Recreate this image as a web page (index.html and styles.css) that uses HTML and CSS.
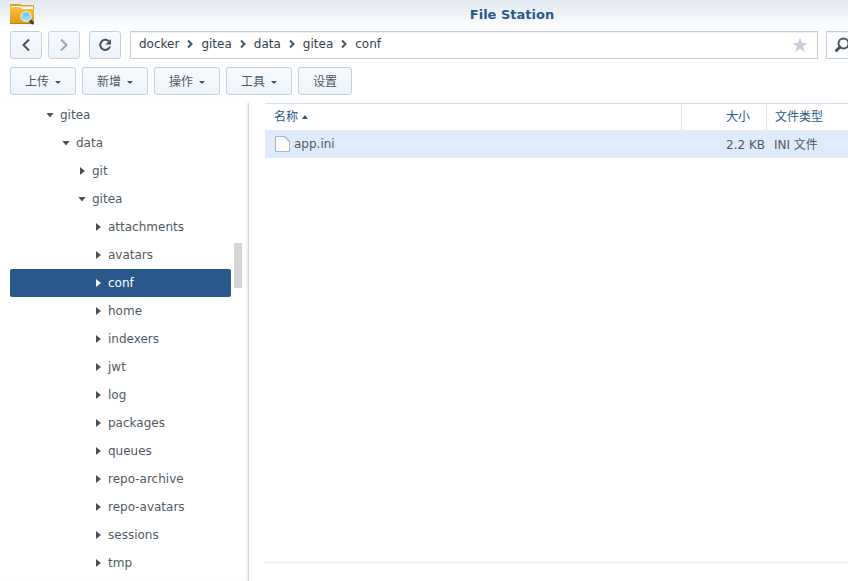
FILE: index.html
```html
<!DOCTYPE html>
<html lang="zh-CN">
<head>
<meta charset="utf-8">
<title>File Station</title>
<link rel="stylesheet" href="styles.css">
</head>
<body>
<div class="window">
  <header class="titlebar">
    <svg class="app-icon" width="26" height="22" viewBox="0 0 26 22" aria-hidden="true">
      <defs>
        <linearGradient id="folder" x1="0" y1="0" x2="0" y2="1"><stop offset="0" stop-color="#fcc03c"/><stop offset="1" stop-color="#dc9a18"/></linearGradient>
        <linearGradient id="lens" x1="0" y1="0" x2="0" y2="1"><stop offset="0" stop-color="#62c3f6"/><stop offset="1" stop-color="#a4e6fd"/></linearGradient>
      </defs>
      <path d="M0 1Q0 0 1 0H10L12 1H22Q24 1 24 2V10H0Z" fill="#e0a01f"/>
      <path d="M1 2H10L11 2.500H23V7H1Z" fill="#fffdf5"/>
      <path d="M0 3H10L12 5H24V19Q24 20 23 20H1Q0 20 0 19Z" fill="url(#folder)"/>
      <path d="M0 19.500H24" stroke="#c17d0c"/>
      <path d="M19.500 16L22.500 19" stroke="#32475b" stroke-width="3" stroke-linecap="round"/>
      <circle cx="16" cy="12.500" r="5" fill="url(#lens)" stroke="#e9dfc0" stroke-width="1.500"/>
    </svg>
    <h1 class="title">File Station</h1>
  </header>

  <div class="navbar">
    <button class="btn nav" aria-label="后退"><svg width="10" height="14" viewBox="0 0 10 14"><path d="M8 1.500L2.500 7L8 12.500" fill="none" stroke="#465360" stroke-width="2"/></svg></button>
    <button class="btn nav forward" aria-label="前进"><svg width="10" height="14" viewBox="0 0 10 14"><path d="M2 1.500L7.500 7L2 12.500" fill="none" stroke="#9ba5b0" stroke-width="2"/></svg></button>
    <button class="btn nav reload" aria-label="刷新"><svg width="14" height="14" viewBox="0 0 14 14"><path d="M10.800 3.300A5 5 0 1 0 12 8.500" fill="none" stroke="#465360" stroke-width="2"/><path d="M13 1V6.500H7.500Z" fill="#465360"/></svg></button>
    <nav class="path" aria-label="路径">
      <a href="#">docker</a><svg class="sep" width="6" height="8" viewBox="0 0 6 8"><path d="M1 .5L4.500 4L1 7.500" /></svg>
      <a href="#">gitea</a><svg class="sep" width="6" height="8" viewBox="0 0 6 8"><path d="M1 .5L4.500 4L1 7.500" /></svg>
      <a href="#">data</a><svg class="sep" width="6" height="8" viewBox="0 0 6 8"><path d="M1 .5L4.500 4L1 7.500" /></svg>
      <a href="#">gitea</a><svg class="sep" width="6" height="8" viewBox="0 0 6 8"><path d="M1 .5L4.500 4L1 7.500" /></svg>
      <a href="#">conf</a>
      <button class="star" aria-label="收藏"><svg width="16" height="16" viewBox="0 0 16 16"><path d="M8 .5L10 6H15.500L11.200 9.400L12.800 15L8 11.700L3.200 15L4.800 9.400L.5 6H6Z" fill="#c5d1de"/></svg></button>
    </nav>
    <label class="search">
      <svg width="17" height="17" viewBox="0 0 17 17" aria-hidden="true"><circle cx="9.500" cy="6.500" r="5" fill="none" stroke="#465360" stroke-width="2"/><path d="M6 10L2.500 13.500" stroke="#465360" stroke-width="3" stroke-linecap="round"/></svg>
      <input type="search" aria-label="搜索">
    </label>
  </div>

  <div class="toolbar">
    <button class="btn">上传<i class="caret"></i></button>
    <button class="btn">新增<i class="caret"></i></button>
    <button class="btn">操作<i class="caret"></i></button>
    <button class="btn">工具<i class="caret"></i></button>
    <button class="btn">设置</button>
  </div>

  <div class="content">
    <aside class="sidebar">
      <ul class="tree">
        <li class="node level1 open"><a href="#">gitea</a></li>
        <li class="node level2 open"><a href="#">data</a></li>
        <li class="node level3"><a href="#">git</a></li>
        <li class="node level3 open"><a href="#">gitea</a></li>
        <li class="node level4"><a href="#">attachments</a></li>
        <li class="node level4"><a href="#">avatars</a></li>
        <li class="node level4 selected"><a href="#">conf</a></li>
        <li class="node level4"><a href="#">home</a></li>
        <li class="node level4"><a href="#">indexers</a></li>
        <li class="node level4"><a href="#">jwt</a></li>
        <li class="node level4"><a href="#">log</a></li>
        <li class="node level4"><a href="#">packages</a></li>
        <li class="node level4"><a href="#">queues</a></li>
        <li class="node level4"><a href="#">repo-archive</a></li>
        <li class="node level4"><a href="#">repo-avatars</a></li>
        <li class="node level4"><a href="#">sessions</a></li>
        <li class="node level4"><a href="#">tmp</a></li>
      </ul>
      <div class="thumb"></div>
    </aside>
    <main class="files">
      <table class="grid">
        <thead>
          <tr><th class="name">名称<i class="sort"></i></th><th class="size">大小</th><th class="type">文件类型</th></tr>
        </thead>
        <tbody>
          <tr>
            <td class="name"><span class="file"><svg width="16" height="17" viewBox="0 0 16 17" aria-hidden="true"><path d="M1.500 .5H10.500L15.500 5.500V15.500H1.500Z" fill="#fff" stroke="#a9b8c0"/><path d="M10 .5H11L15.500 5V6Z" fill="#a9b8c0" stroke="#a9b8c0"/></svg>app.ini</span></td>
            <td class="size">2.2 KB</td>
            <td class="type">INI 文件</td>
          </tr>
        </tbody>
      </table>
      <footer class="status"></footer>
    </main>
  </div>
</div>
</body>
</html>
```
FILE: styles.css
```css
* { box-sizing: border-box; }

body {
  margin: 0;
  overflow: hidden;
  background: #fff;
  color: #505a64;
  font: 12px/18px "DejaVu Sans", "Noto Sans CJK SC", sans-serif;
}

a { color: inherit; text-decoration: none; }
button, input { font: inherit; color: inherit; }

.window {
  display: flex;
  flex-direction: column;
  min-width: 1024px;
  height: 100vh;
  background: linear-gradient(#e1e8f1, #fff 30px);
}

.titlebar {
  display: grid;
  grid-template-columns: 1fr auto 1fr;
  align-items: center;
  height: 31px;
  padding: 0 10px;
}
.app-icon { display: block; margin-top: -2px; }
.title {
  margin: 0 0 2px;
  color: #2a588c;
  font-size: 13px;
  font-weight: bold;
}

.navbar, .toolbar {
  display: flex;
  height: 28px;
  margin: 0 10px 8px;
}
.toolbar { gap: 6px; }

.btn {
  display: flex;
  align-items: center;
  justify-content: center;
  gap: 6px;
  padding: 2px 14px 0;
  border: 1px solid #c3d0de;
  border-radius: 3px;
  background: linear-gradient(#f7fbff, #edf3f8);
}
.nav { width: 32px; padding: 0; margin-right: 6px; }
.forward { border-color: #c9d4e0; margin-right: 9px; }
.reload { margin-right: 9px; }

.caret {
  margin-top: 1px;
  border: 3px solid transparent;
  border-top-color: #465360;
  border-bottom: 0;
}

.path {
  display: flex;
  flex: 1;
  align-items: center;
  padding: 0 8px 2px;
  border: 1px solid #c0cddb;
  background: #fff;
  box-shadow: inset 0 1px #f1f1f1;
  color: #35404b;
}
.sep { margin: 0 8px; fill: none; stroke: #465360; stroke-width: 2; }
.star {
  display: flex;
  margin: 2px 1px 0 auto;
  padding: 0;
  border: 0;
  background: none;
}

.search {
  display: flex;
  align-items: center;
  width: 188px;
  margin-left: 8px;
  padding: 0 7px;
  border: 1px solid #c0cddb;
  background: #fff;
  box-shadow: inset 0 1px #f1f1f1;
}
.search input { flex: 1; min-width: 0; border: 0; outline: 0; background: none; }

.content { display: flex; flex: 1; min-height: 0; }

.sidebar {
  position: relative;
  width: 249px;
  padding: 0 17px 0 10px;
  overflow: hidden;
  border-right: 1px solid #d5d7d9;
  box-shadow: inset -3px 0 3px -2px #e4e4e4;
}
.tree { margin: -2px 0 0; padding: 0; list-style: none; }
.node {
  display: flex;
  align-items: center;
  height: 28px;
  border-radius: 2px;
}
.node::before {
  content: "";
  width: 5px;
  height: 8px;
  margin: 0 7px 0 2px;
  background: #465360;
  clip-path: polygon(0 0, 100% 50%, 0 100%);
}
.open::before {
  width: 8px;
  height: 5px;
  margin: 0 6px 0 0;
  clip-path: polygon(0 0, 100% 0, 50% 100%);
}
.level1 { padding-left: 36px; }
.level2 { padding-left: 52px; }
.level3 { padding-left: 68px; }
.level4 { padding-left: 84px; }
.selected { background: #2a588c; color: #fff; }
.selected::before { background: #fff; }
.thumb {
  position: absolute;
  top: 140px;
  right: 6px;
  width: 8px;
  height: 45px;
  background: #d5d6d8;
}

.files {
  display: flex;
  flex: 1;
  flex-direction: column;
  justify-content: space-between;
  padding: 0 10px 0 16px;
}
.grid {
  width: 100%;
  border-collapse: separate;
  border-spacing: 0;
  table-layout: fixed;
}
.grid th {
  height: 27px;
  padding: 0 8px;
  border-top: 1px solid #d5e0eb;
  color: #2a588c;
  font-weight: normal;
  text-align: left;
}
.grid th + th { border-left: 1px solid #dde6ef; }
.grid td { height: 28px; padding: 0 8px; background: #deebfb; }
.grid .name { padding-left: 9px; }
.grid .size { width: 85px; text-align: right; }
.grid th.size { padding-right: 16px; }
.grid td.size { padding-right: 1px; }
.grid td + td { padding-top: 2px; }
.grid .type { width: 248px; }
.file { display: flex; align-items: center; gap: 4px; }
.sort {
  display: inline-block;
  margin: 0 0 2px 4px;
  border: 3px solid transparent;
  border-top: 0;
  border-bottom: 4px solid #2a588c;
}
.status { height: 19px; border-top: 1px solid #e6edf3; }
```
